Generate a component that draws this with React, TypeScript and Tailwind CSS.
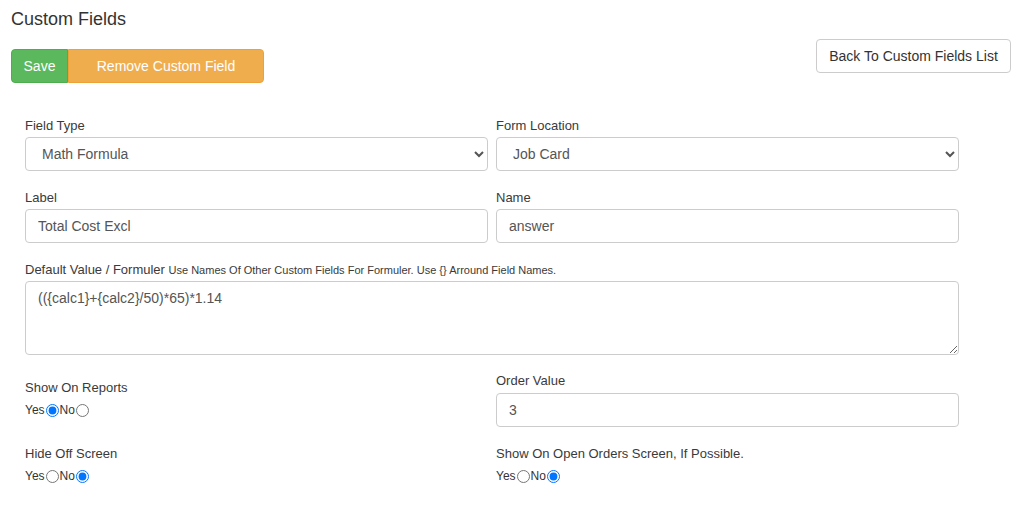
import { ReactNode } from "react";

const font = { fontFamily: '"Liberation Sans", Arial, sans-serif' };

function Label({ children, className = "" }: { children: ReactNode; className?: string }) {
  return <div className={`h-[18px] text-[13px] leading-[18px] text-[#3a3a3a] ${className}`}>{children}</div>;
}

function TextInput({ value }: { value: string }) {
  return (
    <input
      defaultValue={value}
      className="block w-full h-[34px] rounded-[4px] border border-[#ccc] bg-white px-[12px] text-[14px] text-[#555] outline-none"
    />
  );
}

function Select({ value }: { value: string }) {
  return (
    <select
      defaultValue={value}
      className="block w-full h-[34px] rounded-[4px] border border-[#ccc] bg-white pl-[12px] pr-[6px] text-[14px] text-[#555] outline-none"
    >
      <option>{value}</option>
    </select>
  );
}

function YesNo({ name, yes }: { name: string; yes: boolean }) {
  return (
    <div className="flex items-center h-[18px] text-[12px] text-[#333]">
      <span>Yes</span>
      <input type="radio" name={name} defaultChecked={yes} className="w-[13px] h-[13px] mx-[1px]" />
      <span>No</span>
      <input type="radio" name={name} defaultChecked={!yes} className="w-[13px] h-[13px] mx-[1px]" />
    </div>
  );
}

export default function App() {
  return (
    <div className="w-[1021px] h-[515px] bg-white overflow-hidden" style={font}>
      {/* Header */}
      <div className="flex justify-between pl-[11px] pr-[10px]">
        <div>
          <h1 className="pt-[8px] text-[18px] leading-[22px] text-[#333]">Custom Fields</h1>
          <div className="flex mt-[19px]">
            <button className="h-[34px] w-[57px] rounded-l-[4px] bg-[#5cb85c] border border-[#4cae4c] text-[14px] text-white">
              Save
            </button>
            <button className="h-[34px] w-[196px] rounded-r-[4px] bg-[#f0ad4e] border border-[#eea236] text-[14px] text-white">
              Remove Custom Field
            </button>
          </div>
        </div>
        <button className="mt-[39px] h-[34px] px-[12px] w-[195px] rounded-[4px] border border-[#ccc] bg-white text-[14px] text-[#333]">
          Back To Custom Fields List
        </button>
      </div>

      {/* Form */}
      <div className="w-[934px] ml-[25px] mt-[34px]">
        <div className="grid grid-cols-2 gap-x-[8px]">
          <div>
            <Label>Field Type</Label>
            <div className="mt-[2px]"><Select value="Math Formula" /></div>
          </div>
          <div>
            <Label>Form Location</Label>
            <div className="mt-[2px]"><Select value="Job Card" /></div>
          </div>
        </div>

        <div className="grid grid-cols-2 gap-x-[8px] mt-[18px]">
          <div>
            <Label>Label</Label>
            <div className="mt-[2px]"><TextInput value="Total Cost Excl" /></div>
          </div>
          <div>
            <Label>Name</Label>
            <div className="mt-[2px]"><TextInput value="answer" /></div>
          </div>
        </div>

        <div className="mt-[18px]">
          <Label>
            Default Value / Formuler{" "}
            <span className="text-[11px]">Use Names Of Other Custom Fields For Formuler. Use {"{}"} Arround Field Names.</span>
          </Label>
          <textarea
            defaultValue="(({calc1}+{calc2}/50)*65)*1.14"
            className="block mt-[2px] w-full h-[74px] rounded-[4px] border border-[#ccc] bg-white px-[12px] py-[6px] text-[14px] text-[#555] outline-none"
          />
        </div>

        <div className="grid grid-cols-2 gap-x-[8px] mt-[17px]">
          <div className="pt-[7px]">
            <Label>Show On Reports</Label>
            <div className="mt-[4px]"><YesNo name="reports" yes={true} /></div>
          </div>
          <div>
            <Label>Order Value</Label>
            <div className="mt-[3px]"><TextInput value="3" /></div>
          </div>
        </div>

        <div className="grid grid-cols-2 gap-x-[8px] mt-[18px]">
          <div>
            <Label>Hide Off Screen</Label>
            <div className="mt-[4px]"><YesNo name="hide" yes={false} /></div>
          </div>
          <div>
            <Label>Show On Open Orders Screen, If Possible.</Label>
            <div className="mt-[4px]"><YesNo name="open" yes={false} /></div>
          </div>
        </div>
      </div>
    </div>
  );
}
